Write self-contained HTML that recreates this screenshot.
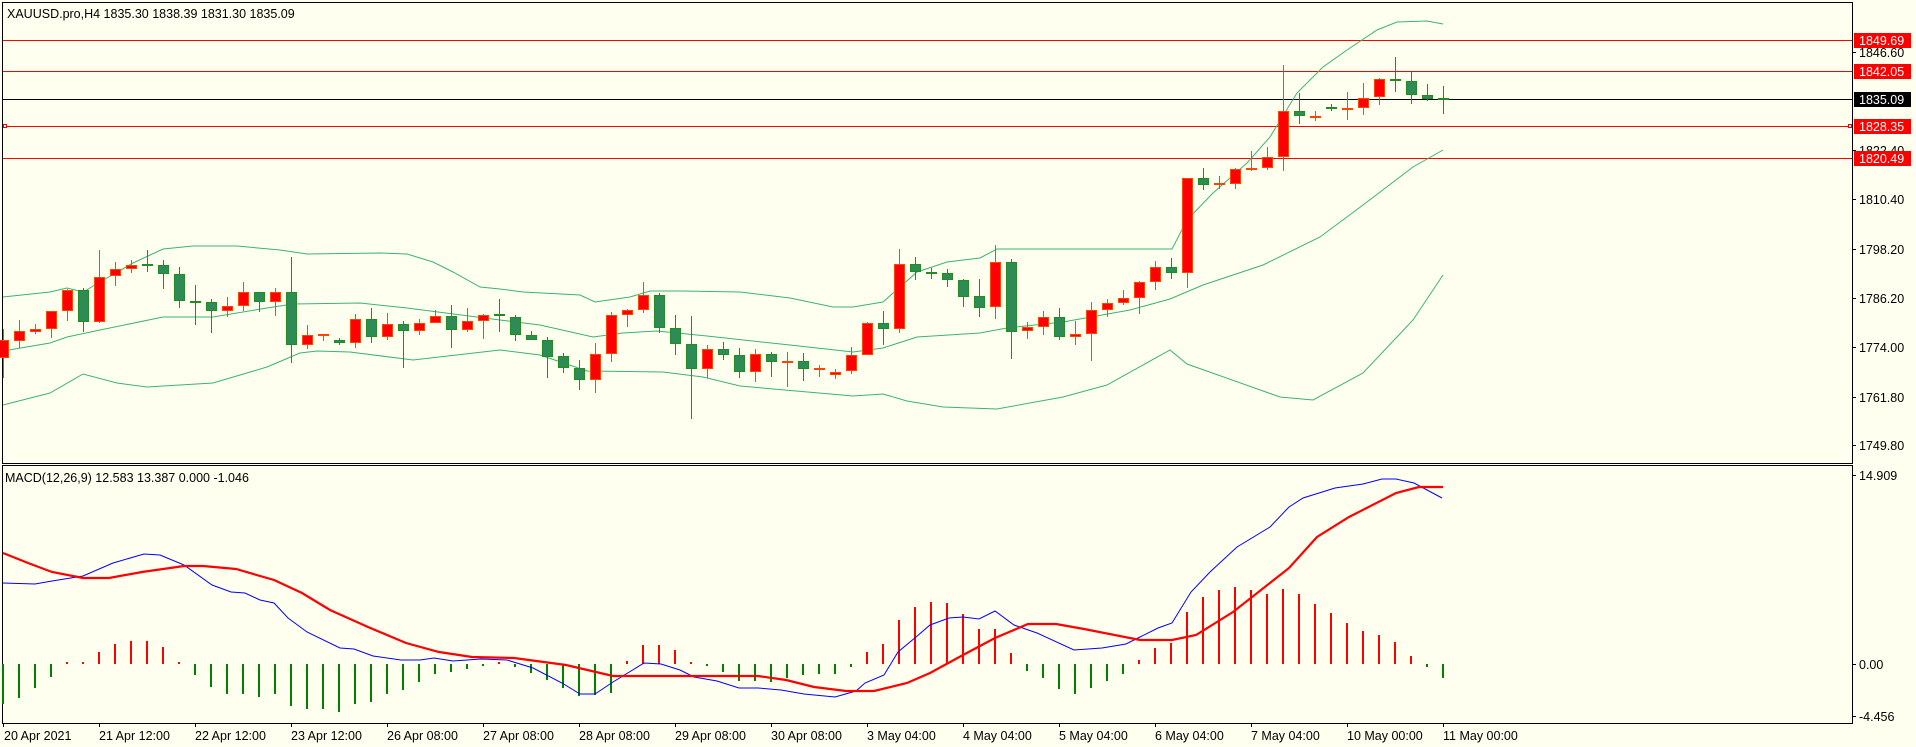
<!DOCTYPE html>
<html><head><meta charset="utf-8"><style>
html,body{margin:0;padding:0;background:#fffff0;}
svg{display:block;}
text{font-family:"Liberation Sans",sans-serif;font-size:12.5px;fill:#000;}
</style></head><body>
<svg width="1916" height="747" viewBox="0 0 1916 747" xmlns="http://www.w3.org/2000/svg" shape-rendering="crispEdges">
<rect x="0" y="0" width="1916" height="747" fill="#fffff0"/>
<g stroke="#000" stroke-width="1" fill="none">
<path d="M2.5 2.5 H1852.5 V463.5 H2.5 Z"/>
<path d="M2.5 465.5 H1852.5 V723.5 H2.5 Z"/>
</g>
<g stroke="#ff0000" stroke-width="1">
<line x1="3" y1="40.5" x2="1852" y2="40.5"/>
<line x1="3" y1="71.5" x2="1852" y2="71.5"/>
<line x1="3" y1="126.5" x2="1852" y2="126.5"/>
<line x1="3" y1="158.5" x2="1852" y2="158.5"/>
</g>
<line x1="3" y1="99.5" x2="1852" y2="99.5" stroke="#000"/>
<rect x="3.5" y="124.5" width="3" height="3" fill="#fff" stroke="#f00"/>
<rect x="1848.5" y="124.5" width="3" height="3" fill="#fff" stroke="#f00"/>

<g fill="none" stroke="#3cb371" stroke-width="1" shape-rendering="auto">
<polyline points="3,297 50,292 67,288 83,292 100,282 133,263 163,249 193,246 237,246 280,250 307,254 380,253 407,254 433,262 453,272 480,287 500,289 523,292 580,295 595,302 630,297 650,291 683,291 740,292 790,298 833,307 853,307 883,302 917,272 947,262 980,258 997,249 1172,249 1187,220 1213,193 1247,163 1270,137 1297,93 1323,67 1347,50 1377,30 1397,22 1427,21 1443,24"/>
<polyline points="3,351 50,343 67,337 100,330 163,317 213,317 267,308 293,304 360,303 407,308 500,320 540,325 593,337 623,333 657,331 707,336 790,345 853,352 883,348 917,337 980,333 1007,328 1063,322 1130,310 1170,299 1203,285 1263,265 1320,237 1363,205 1413,167 1443,150"/>
<polyline points="3,405 50,393 83,374 117,383 147,387 213,383 267,367 300,353 317,351 350,352 413,360 500,350 540,355 587,371 663,372 703,377 740,386 853,396 883,394 907,401 943,407 997,409 1063,397 1107,385 1170,350 1187,364 1280,397 1313,400 1363,373 1413,320 1443,275"/>
</g>

<g id="candles" stroke-width="1">
<g stroke="#ff4500">
<line x1="3.5" y1="329" x2="3.5" y2="378"/><line x1="19.5" y1="320" x2="19.5" y2="348"/><line x1="35.5" y1="324" x2="35.5" y2="334"/><line x1="51.5" y1="311" x2="51.5" y2="338"/><line x1="67.5" y1="289" x2="67.5" y2="321"/><line x1="99.5" y1="250" x2="99.5" y2="323"/><line x1="115.5" y1="262" x2="115.5" y2="286"/><line x1="131.5" y1="260" x2="131.5" y2="273"/><line x1="227.5" y1="297" x2="227.5" y2="317"/><line x1="243.5" y1="282" x2="243.5" y2="311"/><line x1="275.5" y1="288" x2="275.5" y2="316"/><line x1="307.5" y1="325" x2="307.5" y2="349"/><line x1="323.5" y1="335" x2="323.5" y2="341"/><line x1="355.5" y1="314" x2="355.5" y2="348"/><line x1="387.5" y1="313" x2="387.5" y2="340"/><line x1="419.5" y1="319" x2="419.5" y2="335"/><line x1="435.5" y1="310" x2="435.5" y2="323"/><line x1="467.5" y1="308" x2="467.5" y2="332"/><line x1="483.5" y1="314" x2="483.5" y2="339"/><line x1="595.5" y1="343" x2="595.5" y2="393"/><line x1="611.5" y1="312" x2="611.5" y2="362"/><line x1="627.5" y1="309" x2="627.5" y2="327"/><line x1="643.5" y1="282" x2="643.5" y2="313"/><line x1="707.5" y1="345" x2="707.5" y2="378"/><line x1="755.5" y1="349" x2="755.5" y2="382"/><line x1="787.5" y1="352" x2="787.5" y2="387"/><line x1="819.5" y1="365" x2="819.5" y2="377"/><line x1="835.5" y1="369" x2="835.5" y2="379"/><line x1="851.5" y1="347" x2="851.5" y2="374"/><line x1="867.5" y1="322" x2="867.5" y2="355"/><line x1="899.5" y1="249" x2="899.5" y2="333"/><line x1="995.5" y1="245" x2="995.5" y2="319"/><line x1="1027.5" y1="322" x2="1027.5" y2="339"/><line x1="1043.5" y1="311" x2="1043.5" y2="335"/><line x1="1075.5" y1="321" x2="1075.5" y2="345"/><line x1="1091.5" y1="302" x2="1091.5" y2="361"/><line x1="1107.5" y1="299" x2="1107.5" y2="317"/><line x1="1123.5" y1="290" x2="1123.5" y2="305"/><line x1="1139.5" y1="281" x2="1139.5" y2="314"/><line x1="1155.5" y1="261" x2="1155.5" y2="290"/><line x1="1187.5" y1="178" x2="1187.5" y2="288"/><line x1="1219.5" y1="176" x2="1219.5" y2="189"/><line x1="1235.5" y1="168" x2="1235.5" y2="189"/><line x1="1251.5" y1="151" x2="1251.5" y2="171"/><line x1="1267.5" y1="147" x2="1267.5" y2="170"/><line x1="1283.5" y1="65" x2="1283.5" y2="171"/><line x1="1315.5" y1="111" x2="1315.5" y2="121"/><line x1="1347.5" y1="92" x2="1347.5" y2="120"/><line x1="1363.5" y1="83" x2="1363.5" y2="115"/><line x1="1379.5" y1="78" x2="1379.5" y2="105"/>
</g>
<g fill="#ff0000" stroke="#ff4500">
<rect x="-1.5" y="340.5" width="10" height="17"/><rect x="14.5" y="331.5" width="10" height="9"/><rect x="30.5" y="329.5" width="10" height="2"/><rect x="46.5" y="311.5" width="10" height="17"/><rect x="62.5" y="290.5" width="10" height="20"/><rect x="94.5" y="277.5" width="10" height="44"/><rect x="110.5" y="269.5" width="10" height="6"/><rect x="126.5" y="265.5" width="10" height="3"/><rect x="222.5" y="306.5" width="10" height="4"/><rect x="238.5" y="292.5" width="10" height="13"/><rect x="270.5" y="292.5" width="10" height="9"/><rect x="302.5" y="335.5" width="10" height="9"/><rect x="350.5" y="319.5" width="10" height="23"/><rect x="382.5" y="324.5" width="10" height="12"/><rect x="414.5" y="323.5" width="10" height="7"/><rect x="430.5" y="316.5" width="10" height="6"/><rect x="462.5" y="321.5" width="10" height="8"/><rect x="478.5" y="315.5" width="10" height="5"/><rect x="590.5" y="354.5" width="10" height="25"/><rect x="606.5" y="315.5" width="10" height="38"/><rect x="622.5" y="310.5" width="10" height="4"/><rect x="638.5" y="295.5" width="10" height="14"/><rect x="702.5" y="349.5" width="10" height="19"/><rect x="750.5" y="354.5" width="10" height="17"/><rect x="830.5" y="372.5" width="10" height="2"/><rect x="846.5" y="355.5" width="10" height="15"/><rect x="862.5" y="323.5" width="10" height="31"/><rect x="894.5" y="264.5" width="10" height="64"/><rect x="990.5" y="262.5" width="10" height="44"/><rect x="1022.5" y="327.5" width="10" height="3"/><rect x="1038.5" y="317.5" width="10" height="9"/><rect x="1070.5" y="334.5" width="10" height="2"/><rect x="1086.5" y="310.5" width="10" height="23"/><rect x="1102.5" y="303.5" width="10" height="6"/><rect x="1118.5" y="298.5" width="10" height="4"/><rect x="1134.5" y="282.5" width="10" height="15"/><rect x="1150.5" y="267.5" width="10" height="14"/><rect x="1182.5" y="178.5" width="10" height="94"/><rect x="1230.5" y="169.5" width="10" height="14"/><rect x="1262.5" y="157.5" width="10" height="10"/><rect x="1278.5" y="111.5" width="10" height="45"/><rect x="1358.5" y="98.5" width="10" height="9"/><rect x="1374.5" y="79.5" width="10" height="17"/>
</g>
<g fill="#ff4500">
<rect x="318" y="334" width="11" height="2"/><rect x="782" y="361" width="11" height="2"/><rect x="814" y="368" width="11" height="2"/><rect x="1214" y="183" width="11" height="2"/><rect x="1246" y="168" width="11" height="2"/><rect x="1310" y="116" width="11" height="2"/><rect x="1342" y="108" width="11" height="2"/>
</g>
<g stroke="#228b22">
<line x1="83.5" y1="288" x2="83.5" y2="332"/><line x1="147.5" y1="250" x2="147.5" y2="272"/><line x1="163.5" y1="260" x2="163.5" y2="289"/><line x1="179.5" y1="267" x2="179.5" y2="308"/><line x1="195.5" y1="285" x2="195.5" y2="325"/><line x1="211.5" y1="299" x2="211.5" y2="333"/><line x1="259.5" y1="292" x2="259.5" y2="312"/><line x1="291.5" y1="257" x2="291.5" y2="363"/><line x1="339.5" y1="338" x2="339.5" y2="345"/><line x1="371.5" y1="308" x2="371.5" y2="343"/><line x1="403.5" y1="321" x2="403.5" y2="368"/><line x1="451.5" y1="305" x2="451.5" y2="348"/><line x1="499.5" y1="299" x2="499.5" y2="332"/><line x1="515.5" y1="315" x2="515.5" y2="341"/><line x1="531.5" y1="331" x2="531.5" y2="340"/><line x1="547.5" y1="337" x2="547.5" y2="378"/><line x1="563.5" y1="353" x2="563.5" y2="373"/><line x1="579.5" y1="360" x2="579.5" y2="390"/><line x1="659.5" y1="293" x2="659.5" y2="333"/><line x1="675.5" y1="315" x2="675.5" y2="355"/><line x1="691.5" y1="316" x2="691.5" y2="419"/><line x1="723.5" y1="342" x2="723.5" y2="360"/><line x1="739.5" y1="348" x2="739.5" y2="378"/><line x1="771.5" y1="352" x2="771.5" y2="377"/><line x1="803.5" y1="353" x2="803.5" y2="381"/><line x1="883.5" y1="311" x2="883.5" y2="345"/><line x1="915.5" y1="257" x2="915.5" y2="280"/><line x1="931.5" y1="268" x2="931.5" y2="279"/><line x1="947.5" y1="269" x2="947.5" y2="287"/><line x1="963.5" y1="279" x2="963.5" y2="307"/><line x1="979.5" y1="279" x2="979.5" y2="317"/><line x1="1011.5" y1="259" x2="1011.5" y2="359"/><line x1="1059.5" y1="308" x2="1059.5" y2="340"/><line x1="1171.5" y1="258" x2="1171.5" y2="279"/><line x1="1203.5" y1="168" x2="1203.5" y2="190"/><line x1="1299.5" y1="93" x2="1299.5" y2="124"/><line x1="1331.5" y1="104" x2="1331.5" y2="111"/><line x1="1395.5" y1="57" x2="1395.5" y2="92"/><line x1="1411.5" y1="72" x2="1411.5" y2="104"/><line x1="1427.5" y1="84" x2="1427.5" y2="101"/><line x1="1443.5" y1="86" x2="1443.5" y2="114"/>
</g>
<g fill="#2e8b57" stroke="#228b22">
<rect x="78.5" y="290.5" width="10" height="31"/><rect x="158.5" y="265.5" width="10" height="8"/><rect x="174.5" y="274.5" width="10" height="26"/><rect x="206.5" y="302.5" width="10" height="8"/><rect x="254.5" y="292.5" width="10" height="9"/><rect x="286.5" y="292.5" width="10" height="52"/><rect x="334.5" y="340.5" width="10" height="2"/><rect x="366.5" y="319.5" width="10" height="17"/><rect x="398.5" y="324.5" width="10" height="6"/><rect x="446.5" y="316.5" width="10" height="13"/><rect x="510.5" y="317.5" width="10" height="17"/><rect x="526.5" y="335.5" width="10" height="4"/><rect x="542.5" y="340.5" width="10" height="16"/><rect x="558.5" y="356.5" width="10" height="11"/><rect x="574.5" y="368.5" width="10" height="11"/><rect x="654.5" y="295.5" width="10" height="32"/><rect x="670.5" y="328.5" width="10" height="15"/><rect x="686.5" y="344.5" width="10" height="24"/><rect x="718.5" y="349.5" width="10" height="5"/><rect x="734.5" y="355.5" width="10" height="16"/><rect x="766.5" y="354.5" width="10" height="7"/><rect x="798.5" y="361.5" width="10" height="7"/><rect x="878.5" y="323.5" width="10" height="5"/><rect x="910.5" y="264.5" width="10" height="7"/><rect x="942.5" y="273.5" width="10" height="6"/><rect x="958.5" y="280.5" width="10" height="16"/><rect x="974.5" y="296.5" width="10" height="11"/><rect x="1006.5" y="262.5" width="10" height="69"/><rect x="1054.5" y="317.5" width="10" height="19"/><rect x="1166.5" y="267.5" width="10" height="5"/><rect x="1198.5" y="178.5" width="10" height="6"/><rect x="1294.5" y="111.5" width="10" height="4"/><rect x="1406.5" y="81.5" width="10" height="13"/><rect x="1422.5" y="95.5" width="10" height="3"/>
</g>
<g fill="#228b22">
<rect x="142" y="264" width="11" height="2"/><rect x="190" y="301" width="11" height="2"/><rect x="494" y="314" width="11" height="2"/><rect x="926" y="272" width="11" height="2"/><rect x="1326" y="107" width="11" height="2"/><rect x="1390" y="79" width="11" height="2"/><rect x="1438" y="98" width="11" height="2"/>
</g>
</g>

<g stroke-width="2" fill="none">
<path stroke="#008000" d="M3 664V704M19 664V698M35 664V688M51 664V677M195 664V675M211 664V687M227 664V694M243 664V694M259 664V697M275 664V694M291 664V706M307 664V709M323 664V709M339 664V712M355 664V704M371 664V702M387 664V694M403 664V690M419 664V682M435 664V674M451 664V672M467 664V669M483 664V666M515 664V667M531 664V673M547 664V680M563 664V688M579 664V696M595 664V695M611 664V693M707 664V666M723 664V672M739 664V681M755 664V681M771 664V682M787 664V678M803 664V675M819 664V674M835 664V674M851 664V667M1027 664V671M1043 664V678M1059 664V689M1075 664V694M1091 664V688M1107 664V681M1123 664V674M1427 664V667M1443 664V678"/>
<path stroke="#ff0000" d="M67 664V662M83 664V662M99 664V652M115 664V644M131 664V641M147 664V641M163 664V647M179 664V662M499 664V662M627 664V661M643 664V645M659 664V645M675 664V650M691 664V662M867 664V652M883 664V644M899 664V620M915 664V607M931 664V602M947 664V603M963 664V614M979 664V629M995 664V629M1011 664V653M1139 664V660M1155 664V648M1171 664V643M1187 664V612M1203 664V597M1219 664V590M1235 664V587M1251 664V590M1267 664V594M1283 664V589M1299 664V594M1315 664V604M1331 664V613M1347 664V623M1363 664V631M1379 664V635M1395 664V642M1411 664V656"/>
</g>
<g fill="none" shape-rendering="auto">
<polyline stroke="#0000ff" stroke-width="1" points="3,583 35,584 52,581 83,576 113,563 144,554 160,555 184,565 212,585 231,592 245,593 260,600 274,603 288,618 307,632 340,648 354,649 373,656 401,660 420,660 434,658 453,661 481,659 507,660 533,668 562,683 580,694 595,694 613,682 644,663 661,664 680,670 694,677 717,681 739,688 758,688 781,690 804,694 835,697 856,691 865,683 884,675 898,652 916,637 930,625 949,618 963,617 979,619 995,611 1014,625 1037,633 1074,650 1102,648 1126,644 1140,637 1158,628 1172,623 1191,592 1210,572 1237,547 1270,527 1289,507 1303,498 1335,488 1363,484 1382,479 1396,479 1414,483 1442,498"/>
<polyline stroke="#ff0000" stroke-width="2.2" points="3,553 28,563 52,572 83,578 109,578 142,572 184,566 203,566 236,569 274,580 302,593 330,610 368,627 406,643 439,652 472,657 514,658 566,665 613,676 722,676 758,676 786,680 814,687 846,691 874,691 907,683 930,673 963,655 995,638 1028,624 1056,624 1084,629 1140,640 1172,640 1196,635 1233,612 1289,568 1317,537 1349,517 1396,493 1419,487 1443,487"/>
</g>

<g stroke="#000">
<path d="M1852 52.5H1856M1852 150.5H1856M1852 199.5H1856M1852 249.5H1856M1852 298.5H1856M1852 347.5H1856M1852 397.5H1856M1852 445.5H1856M1852 475.5H1856M1852 664.5H1856M1852 716.5H1856"/>
<path d="M3.5 723V727M99.5 723V727M195.5 723V727M291.5 723V727M387.5 723V727M483.5 723V727M579.5 723V727M675.5 723V727M771.5 723V727M867.5 723V727M963.5 723V727M1059.5 723V727M1155.5 723V727M1251.5 723V727M1347.5 723V727M1443.5 723V727"/>
</g>
<g>
<text x="1859" y="57">1846.60</text>
<text x="1859" y="155">1822.40</text>
<text x="1859" y="204">1810.40</text>
<text x="1859" y="254">1798.20</text>
<text x="1859" y="303">1786.20</text>
<text x="1859" y="352">1774.00</text>
<text x="1859" y="402">1761.80</text>
<text x="1859" y="450">1749.80</text>
<text x="1859" y="480">14.909</text>
<text x="1859" y="669">0.00</text>
<text x="1859" y="721">-4.456</text>
</g>
<rect x="1854" y="33" width="57" height="15" fill="#ff0000"/>
<rect x="1854" y="64" width="57" height="15" fill="#ff0000"/>
<rect x="1854" y="92" width="57" height="15" fill="#000"/>
<rect x="1854" y="119" width="57" height="15" fill="#ff0000"/>
<rect x="1854" y="151" width="57" height="15" fill="#ff0000"/>
<text x="1859" y="45" style="fill:#fff">1849.69</text>
<text x="1859" y="76" style="fill:#fff">1842.05</text>
<text x="1859" y="104" style="fill:#fff">1835.09</text>
<text x="1859" y="131" style="fill:#fff">1828.35</text>
<text x="1859" y="163" style="fill:#fff">1820.49</text>

<text x="7" y="18">XAUUSD.pro,H4  1835.30 1838.39 1831.30 1835.09</text>
<text x="5" y="482">MACD(12,26,9) 12.583 13.387 0.000 -1.046</text>

<g>
<text x="4" y="740">20 Apr 2021</text>
<text x="99" y="740">21 Apr 12:00</text>
<text x="195" y="740">22 Apr 12:00</text>
<text x="291" y="740">23 Apr 12:00</text>
<text x="387" y="740">26 Apr 08:00</text>
<text x="483" y="740">27 Apr 08:00</text>
<text x="579" y="740">28 Apr 08:00</text>
<text x="675" y="740">29 Apr 08:00</text>
<text x="771" y="740">30 Apr 08:00</text>
<text x="867" y="740">3 May 04:00</text>
<text x="963" y="740">4 May 04:00</text>
<text x="1059" y="740">5 May 04:00</text>
<text x="1155" y="740">6 May 04:00</text>
<text x="1251" y="740">7 May 04:00</text>
<text x="1347" y="740">10 May 00:00</text>
<text x="1443" y="740">11 May 00:00</text>
</g>
</svg>
</body></html>
